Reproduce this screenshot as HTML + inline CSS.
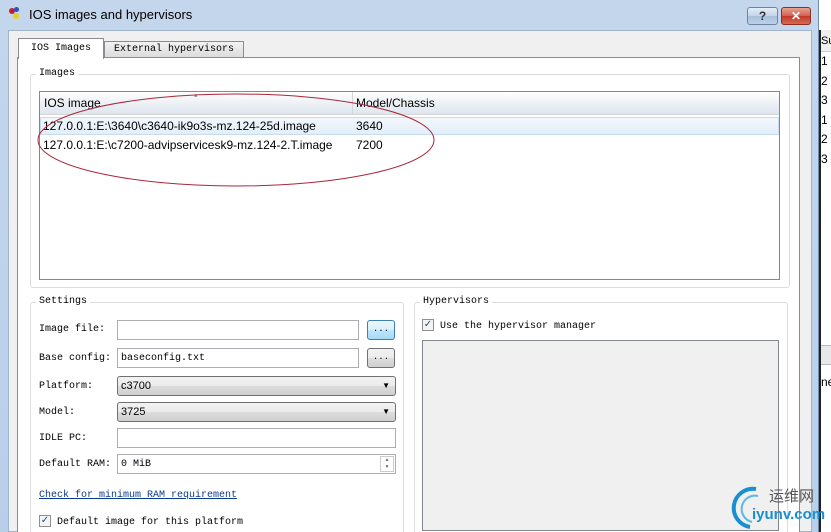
<!DOCTYPE html><html><head><style>
*{box-sizing:border-box;margin:0;padding:0}
html,body{width:831px;height:532px;overflow:hidden}
body{position:relative;background:#fff;font-family:"Liberation Mono",monospace;font-size:10px;color:#000}
.a{position:absolute}
.sans{font-family:"Liberation Sans",sans-serif;font-size:12px}
.box{border:1px solid #abadb3;background:#fff}
.btn{border:1px solid #707070;border-radius:3px;background:linear-gradient(#f2f2f2,#ebebeb 50%,#dddddd 51%,#cfcfcf);text-align:center;font-size:9px;line-height:16px}
.cb{width:12px;height:12px;border:1px solid #8f8f8f;background:#f4f4f4;font-size:10px;line-height:10px;text-align:center;color:#2a4a8a;font-family:"DejaVu Sans",sans-serif}
.grp{border:1px solid #dcdcdc;border-radius:3px}
.lg{background:#fff;padding:0 3px}
</style></head><body>
<div class="a" style="left:812px;top:0;width:19px;height:532px;background:#fff"></div>
<div class="a" style="left:819px;top:30px;width:12px;height:502px;border-left:2px solid #222"></div>
<div class="a" style="left:821px;top:30px;width:10px;height:22px;background:#f0f0f0;border-bottom:1px solid #ccc;font-family:'Liberation Sans';font-size:11px;line-height:22px">Su</div>
<div class="a sans" style="left:821px;top:52px;line-height:19.5px;font-size:12px">1<br>2<br>3<br>1<br>2<br>3</div>
<div class="a" style="left:821px;top:345px;width:10px;height:20px;background:#e8e8e8;border-top:1px solid #bbb;border-bottom:1px solid #bbb"></div>
<div class="a sans" style="left:821px;top:375px;font-size:12px">ne</div>
<div class="a" style="left:0;top:0;width:819px;height:532px;background:linear-gradient(#c4d6ec,#b9cfe9);border-right:1px solid #6f8db0"></div>
<div class="a" style="left:8px;top:30px;width:804px;height:502px;background:#f0f0f0;border:1px solid #a0b4cc"></div>
<div class="a" style="left:9px;top:8px;width:6px;height:6px;border-radius:3px;background:#c02030"></div>
<div class="a" style="left:14px;top:7px;width:5px;height:5px;border-radius:3px;background:#3050c0"></div>
<div class="a" style="left:13px;top:13px;width:6px;height:6px;border-radius:3px;background:#e8d020"></div>
<div class="a sans" style="left:29px;top:7px;font-size:13px">IOS images and hypervisors</div>
<div class="a" style="left:747px;top:7px;width:31px;height:18px;border:1px solid #6d85a3;border-radius:3px;background:linear-gradient(#e4edf7,#c3d4e8 50%,#a9c0dc 51%,#bcd0e8);text-align:center;font:bold 12px 'Liberation Sans';line-height:16px;color:#333">?</div>
<div class="a" style="left:781px;top:7px;width:30px;height:18px;border:1px solid #8a3028;border-radius:3px;background:linear-gradient(#e8a090,#d06050 50%,#c03828 51%,#d86850);text-align:center;font:bold 12px 'Liberation Sans';line-height:16px;color:#fff">✕</div>
<div class="a" style="left:17px;top:57px;width:783px;height:480px;border:1px solid #898c95;background:#fff"></div>
<div class="a" style="left:104px;top:41px;width:140px;height:17px;border:1px solid #898c95;background:linear-gradient(#f2f2f2,#dcdcdc);text-align:center;line-height:15px">External hypervisors</div>
<div class="a" style="left:18px;top:38px;width:86px;height:21px;border:1px solid #898c95;border-bottom:none;background:#fff;text-align:center;line-height:19px">IOS Images</div>
<div class="a grp" style="left:30px;top:74px;width:760px;height:214px"></div>
<div class="a lg" style="left:36px;top:68px">Images</div>
<div class="a" style="left:39px;top:91px;width:741px;height:189px;border:1px solid #828790;background:#fff"></div>
<div class="a" style="left:40px;top:92px;width:739px;height:23px;background:linear-gradient(#fff,#f1f3f6 40%,#dde6f0);border-bottom:1px solid #d5d5d5"></div>
<div class="a" style="left:352px;top:92px;width:1px;height:23px;background:#d5d5d5"></div>
<div class="a sans" style="left:44px;top:96px">IOS image</div>
<div class="a sans" style="left:356px;top:96px">Model/Chassis</div>
<div class="a" style="left:194px;top:92px;font-size:6px;color:#999">▲</div>
<div class="a" style="left:40px;top:117px;width:739px;height:18px;background:linear-gradient(#f2f7fc,#e3eef9);border:1px solid #c9dbef"></div>
<div class="a sans" style="left:43px;top:119px">127.0.0.1:E:\3640\c3640-ik9o3s-mz.124-25d.image</div>
<div class="a sans" style="left:356px;top:119px">3640</div>
<div class="a sans" style="left:43px;top:138px">127.0.0.1:E:\c7200-advipservicesk9-mz.124-2.T.image</div>
<div class="a sans" style="left:356px;top:138px">7200</div>
<svg class="a" style="left:0;top:0" width="831" height="532"><ellipse cx="236" cy="140" rx="198" ry="46" fill="none" stroke="#a8283a" stroke-width="1"/></svg>
<div class="a grp" style="left:30px;top:302px;width:374px;height:240px"></div>
<div class="a lg" style="left:36px;top:296px">Settings</div>
<div class="a" style="left:39px;top:324px">Image file:</div>
<div class="a box" style="left:117px;top:320px;width:242px;height:20px"></div>
<div class="a btn" style="left:367px;top:320px;width:28px;height:20px;border-color:#3c7fb1;background:linear-gradient(#eaf6fd,#d9f0fc 50%,#bee6fd 51%,#a7d9f5)">...</div>
<div class="a" style="left:39px;top:353px">Base config:</div>
<div class="a box" style="left:117px;top:348px;width:242px;height:20px;padding:4px 3px">baseconfig.txt</div>
<div class="a btn" style="left:367px;top:348px;width:28px;height:20px">...</div>
<div class="a" style="left:39px;top:381px">Platform:</div>
<div class="a btn" style="left:117px;top:376px;width:279px;height:20px;text-align:left;padding-left:3px;font-family:'Liberation Sans';font-size:11px;line-height:18px">c3700<span style="position:absolute;right:5px;font-size:8px">▼</span></div>
<div class="a" style="left:39px;top:407px">Model:</div>
<div class="a btn" style="left:117px;top:402px;width:279px;height:20px;text-align:left;padding-left:3px;font-family:'Liberation Sans';font-size:11px;line-height:18px">3725<span style="position:absolute;right:5px;font-size:8px">▼</span></div>
<div class="a" style="left:39px;top:433px">IDLE PC:</div>
<div class="a box" style="left:117px;top:428px;width:279px;height:20px"></div>
<div class="a" style="left:39px;top:459px">Default RAM:</div>
<div class="a box" style="left:117px;top:454px;width:279px;height:20px;padding:4px 3px">0 MiB</div>
<div class="a" style="left:380px;top:456px;width:14px;height:16px;border:1px solid #ccc;font-size:5px;text-align:center;line-height:7px;color:#666">▲<br>▼</div>
<div class="a" style="left:39px;top:490px;color:#0b3c8a;text-decoration:underline">Check for minimum RAM requirement</div>
<div class="a cb" style="left:39px;top:515px">✓</div>
<div class="a" style="left:57px;top:517px">Default image for this platform</div>
<div class="a grp" style="left:414px;top:302px;width:374px;height:240px"></div>
<div class="a lg" style="left:420px;top:296px">Hypervisors</div>
<div class="a cb" style="left:422px;top:319px">✓</div>
<div class="a" style="left:440px;top:321px">Use the hypervisor manager</div>
<div class="a" style="left:422px;top:340px;width:357px;height:191px;border:1px solid #828790;background:#f0f0f0"></div>
<svg class="a" style="left:728px;top:484px" width="36" height="46"><path d="M28 5 A19 19 0 1 0 22 43" fill="none" stroke="#1a8fd0" stroke-width="4"/><path d="M30 12 A13 13 0 1 0 24 38" fill="none" stroke="#59b8e8" stroke-width="2"/></svg>
<div class="a" style="left:769px;top:487px;font:15px 'Noto Sans CJK SC',sans-serif;color:#555;line-height:18px">运维网</div>
<div class="a" style="left:752px;top:506px;font:bold 15px 'Liberation Sans',sans-serif;color:#1a8fd0;line-height:18px">iyunv.com</div>
</body></html>
